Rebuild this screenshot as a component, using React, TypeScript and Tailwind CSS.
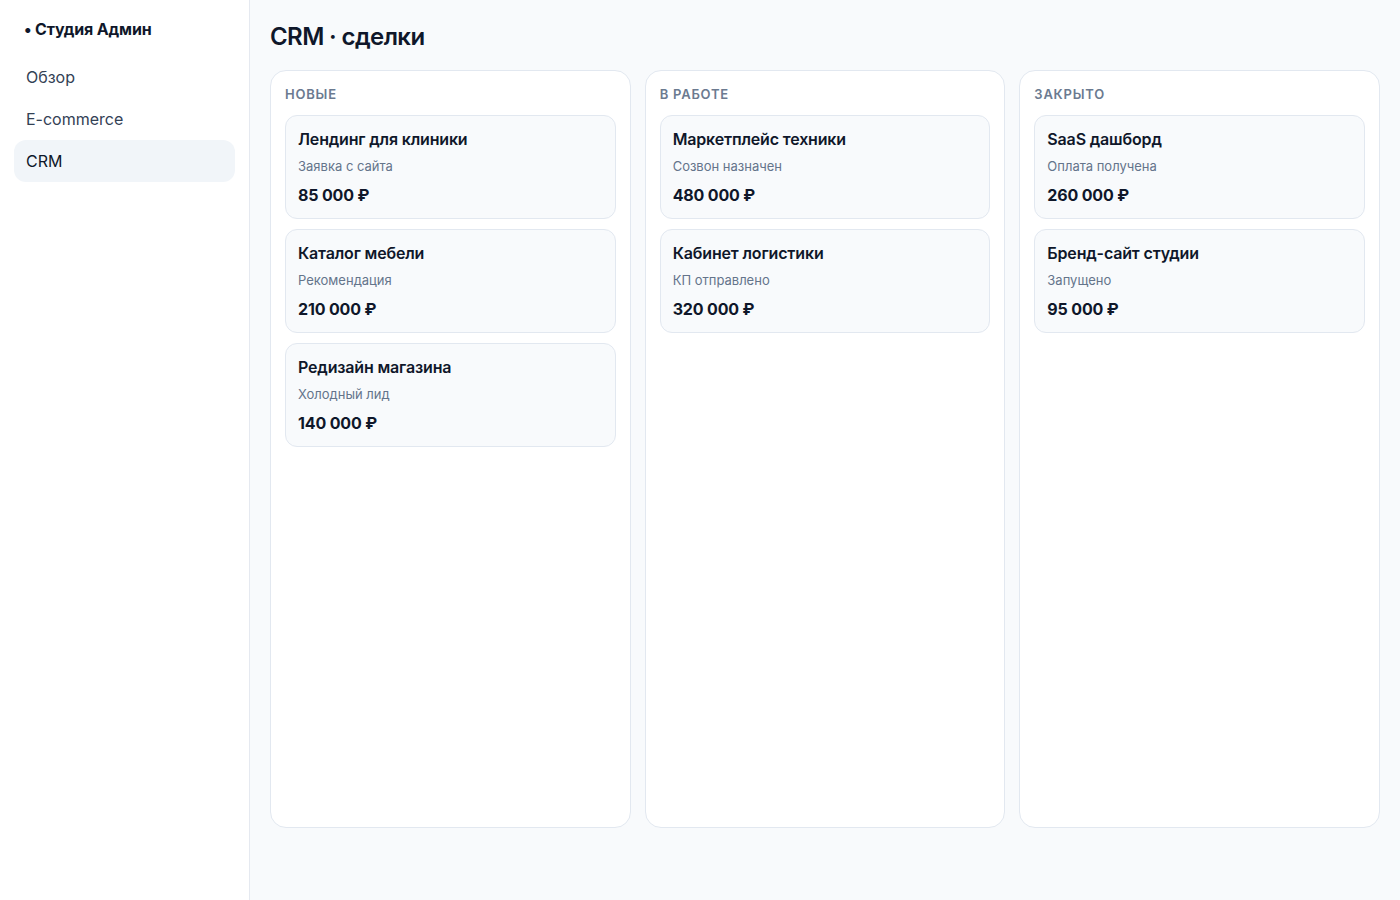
import React from "react";

const columns = [
  {
    title: "Новые",
    deals: [
      { name: "Лендинг для клиники", note: "Заявка с сайта", sum: "85 000 ₽" },
      { name: "Каталог мебели", note: "Рекомендация", sum: "210 000 ₽" },
      { name: "Редизайн магазина", note: "Холодный лид", sum: "140 000 ₽" },
    ],
  },
  {
    title: "В работе",
    deals: [
      { name: "Маркетплейс техники", note: "Созвон назначен", sum: "480 000 ₽" },
      { name: "Кабинет логистики", note: "КП отправлено", sum: "320 000 ₽" },
    ],
  },
  {
    title: "Закрыто",
    deals: [
      { name: "SaaS дашборд", note: "Оплата получена", sum: "260 000 ₽" },
      { name: "Бренд-сайт студии", note: "Запущено", sum: "95 000 ₽" },
    ],
  },
];

export default function App() {
  return (
    <div
      className="flex min-h-[900px] w-full bg-[#f8fafc] text-[#0f172a]"
      style={{ fontFamily: "Inter, 'Noto Sans', sans-serif" }}
    >
      <aside className="w-[250px] shrink-0 border-r border-[#e5e9f0] bg-white p-[14px]">
        <div className="mb-3 flex h-[30px] items-center px-2.5 text-base font-bold tracking-[-0.01em]">
          • Студия Админ
        </div>
        <nav className="flex flex-col">
          {["Обзор", "E-commerce", "CRM"].map((item) => (
            <div
              key={item}
              className={
                item === "CRM"
                  ? "flex h-[42px] items-center rounded-xl bg-[#f1f5f9] px-3 text-base text-[#0f172a]"
                  : "flex h-[42px] items-center rounded-xl px-3 text-base text-[#334155]"
              }
            >
              {item}
            </div>
          ))}
        </nav>
      </aside>
      <main className="flex-1 p-5">
        <h1 className="mb-4 text-2xl font-semibold leading-[34px] tracking-tight">CRM · сделки</h1>
        <div className="grid grid-cols-3 gap-3.5">
          {columns.map((col) => (
            <section
              key={col.title}
              className="min-h-[758px] rounded-2xl border border-[#e2e8f0] bg-white p-3.5"
            >
              <div className="mb-3 text-[13px] font-semibold uppercase leading-[18px] tracking-[0.06em] text-[#6b7a90]">
                {col.title}
              </div>
              <div className="flex flex-col gap-2.5">
                {col.deals.map((d) => (
                  <div
                    key={d.name}
                    className="rounded-xl border border-[#e2e8f0] bg-[#f8fafc] p-3"
                  >
                    <div className="text-base font-semibold leading-[22px] tracking-[-0.01em]">{d.name}</div>
                    <div className="mt-1.5 text-[13px] leading-5 text-[#64748b]">{d.note}</div>
                    <div className="mt-2 text-base font-bold leading-[22px] tracking-[-0.01em]">{d.sum}</div>
                  </div>
                ))}
              </div>
            </section>
          ))}
        </div>
      </main>
    </div>
  );
}
